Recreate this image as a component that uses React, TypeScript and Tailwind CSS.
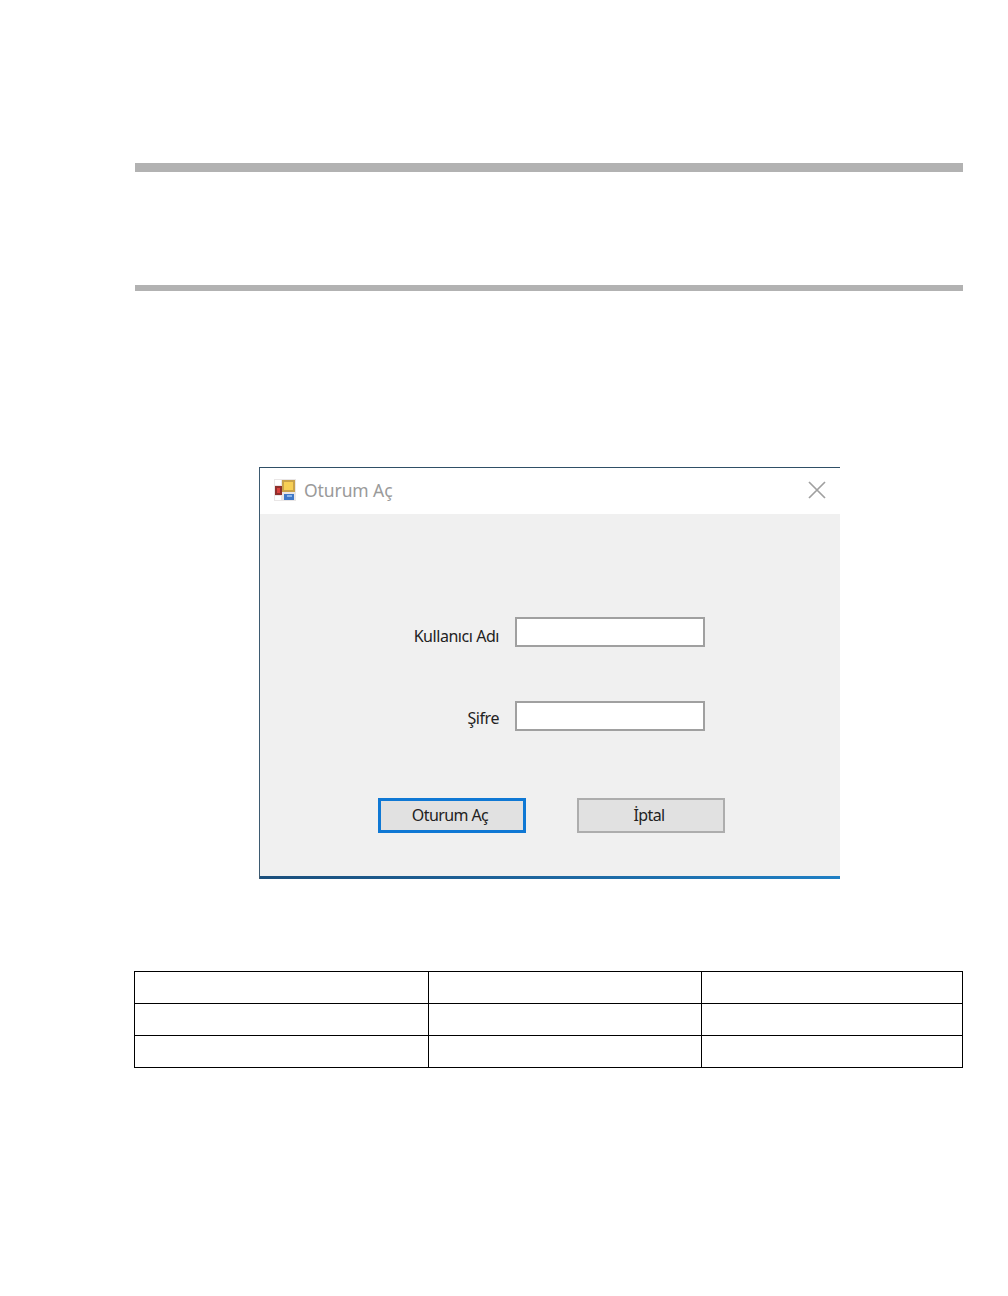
function AppIcon() {
  return (
    <svg width="22" height="22" viewBox="0 0 22 22" className="shrink-0">
      <rect x="0" y="0" width="22" height="22" fill="#e9e6e6" />
      <rect x="1" y="1" width="6" height="5" fill="#ffffff" />
      <rect x="8" y="1" width="13" height="12" fill="#c9a24a" />
      <rect x="10" y="3" width="9" height="8" fill="#f7cf55" />
      <rect x="1" y="7" width="7" height="9" fill="#8f2f2c" />
      <rect x="3" y="9" width="3" height="5" fill="#d9403c" />
      <rect x="10" y="15" width="10" height="6" fill="#3f78c8" />
      <rect x="13" y="16" width="5" height="2" fill="#8ab4ea" />
      <rect x="1" y="17" width="6" height="4" fill="#ffffff" />
    </svg>
  );
}

function TableRow({ last }: { last?: boolean }) {
  return (
    <div className={`grid grid-cols-[294px_273px_1fr] ${last ? 'h-[31px]' : 'h-[32px] border-b border-black'}`}>
      <div className="border-r border-black" />
      <div className="border-r border-black" />
      <div />
    </div>
  );
}

function FormRow({ label, labelClass }: { label: string; labelClass: string }) {
  return (
    <div className="flex items-center h-[30px]">
      <div className={`w-[239px] text-right text-[16px] leading-[22px] tracking-[-0.45px] text-[#222] ${labelClass}`}>{label}</div>
      <div className="ml-[16px] w-[190px] h-[30px] bg-white border-2 border-[#a0a0a0]" />
    </div>
  );
}

export default function App() {
  return (
    <div className="w-[1008px] h-[1296px] bg-white pt-[163px] font-['Noto_Sans',sans-serif]">
      <div className="ml-[135px] w-[828px] h-[9px] bg-[#b2b2b2]" />
      <div className="ml-[135px] w-[828px] h-[6px] mt-[113px] bg-[#b2b2b2]" />

      <div className="ml-[259px] mt-[176px] w-[581px] h-[412px] flex flex-col border-l border-t border-l-[#3d5a70] border-t-[#2f4f66]">
        <div className="h-[46px] bg-white flex items-center pl-[14px] pr-[13px] pb-[2px]">
          <AppIcon />
          <span className="ml-[8px] text-[17.5px] tracking-[-0.1px] text-[#9a9a9a]">Oturum Aç</span>
          <svg width="20" height="20" viewBox="0 0 20 20" className="ml-auto mb-[1px]" fill="none" stroke="#a0a0a0" strokeWidth="1.7">
            <path d="M2 2 L18 18 M18 2 L2 18" />
          </svg>
        </div>
        <div className="flex-1 bg-[#f0f0f0] pt-[103px]">
          <div className="flex flex-col gap-[54px]">
            <FormRow label="Kullanıcı Adı" labelClass="pt-[8px]" />
            <FormRow label="Şifre" labelClass="pt-[4px]" />
          </div>
          <div className="flex ml-[118px] mt-[67px] gap-[51px] text-[16px] tracking-[-0.6px] text-[#222]">
            <div className="w-[148px] h-[35px] bg-[#e1e1e1] border-[3px] border-[#0f78d4] flex items-center justify-center pb-[2px] pr-[4px]">Oturum Aç</div>
            <div className="w-[148px] h-[35px] bg-[#e1e1e1] border-2 border-[#adadad] flex items-center justify-center pb-[2px] pr-[4px]">İptal</div>
          </div>
        </div>
        <div className="h-[3px] bg-gradient-to-r from-[#1b4f7c] to-[#1f7fc4]" />
      </div>

      <div className="ml-[134px] mt-[92px] w-[829px] border border-black">
        <TableRow />
        <TableRow />
        <TableRow last />
      </div>
    </div>
  );
}
